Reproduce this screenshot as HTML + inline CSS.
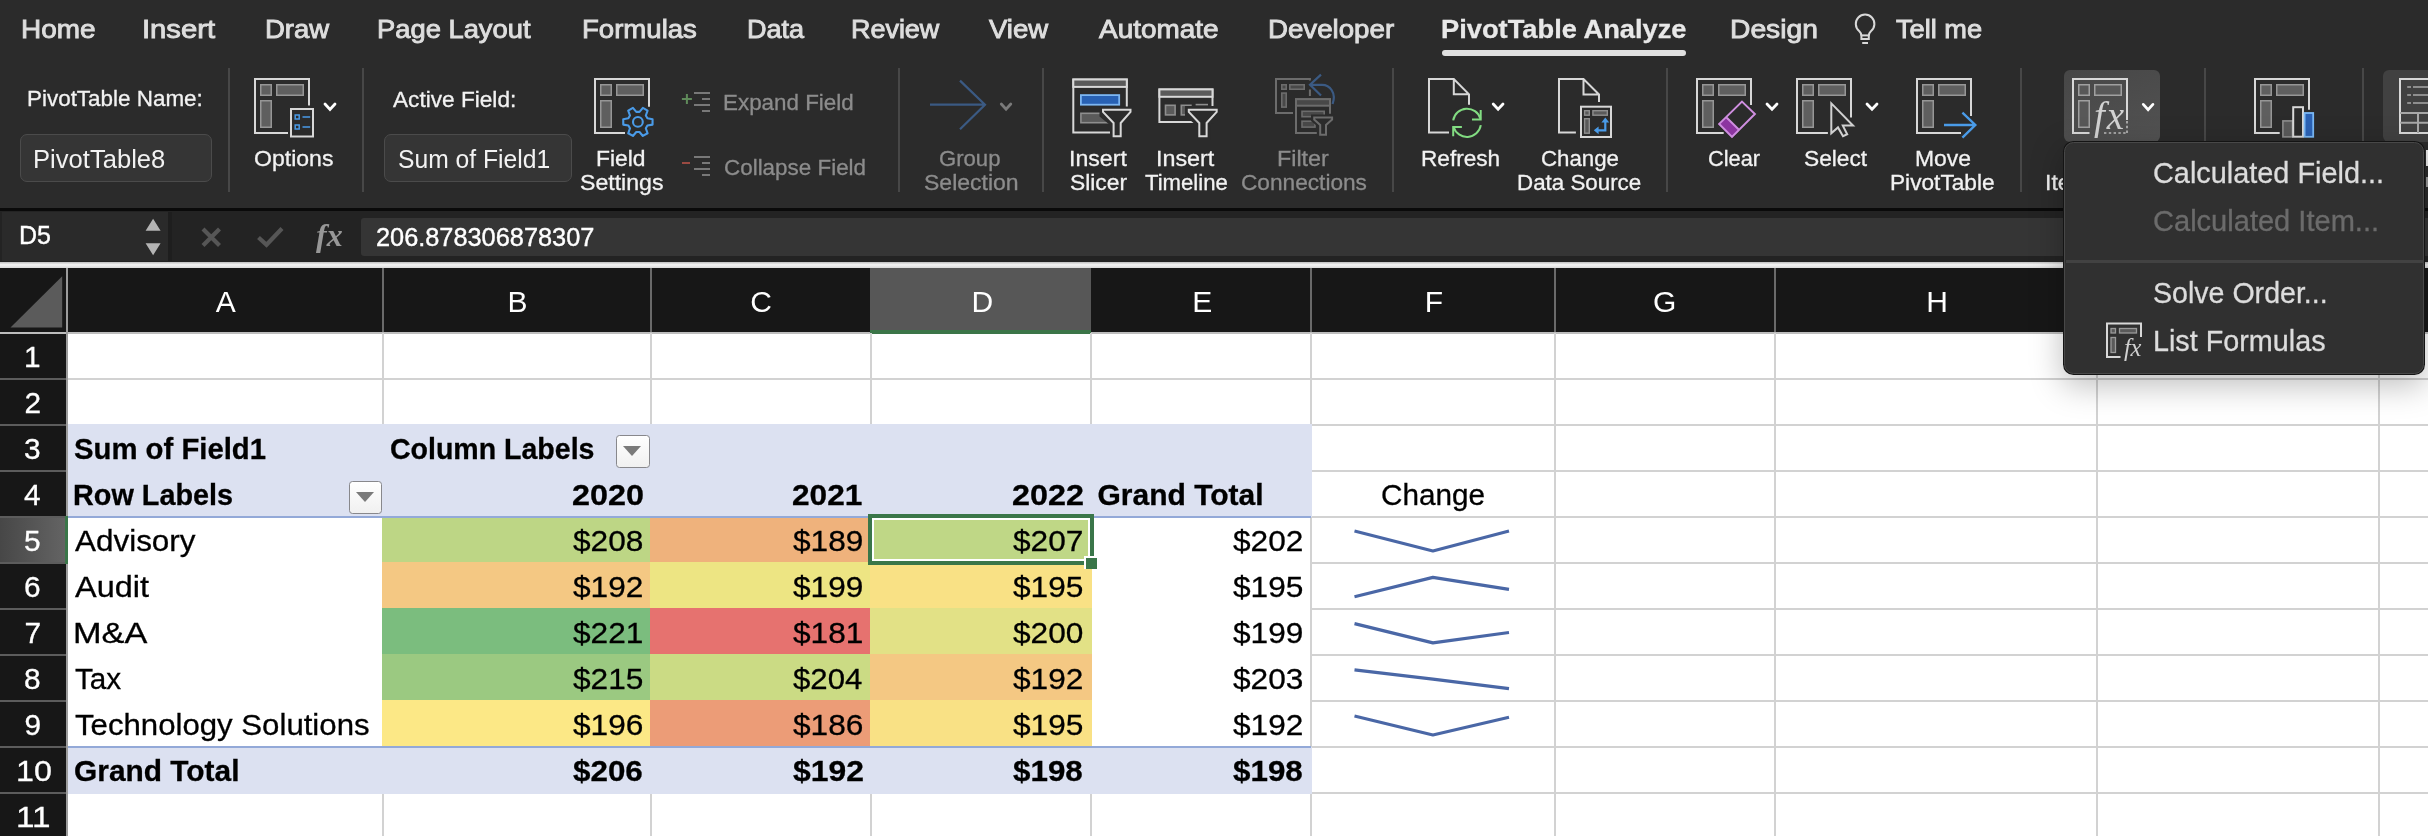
<!DOCTYPE html>
<html><head><meta charset="utf-8"><title>Excel</title>
<style>
html,body{margin:0;padding:0;}
body{width:2428px;height:836px;overflow:hidden;position:relative;background:#2b2b2b;font-family:"Liberation Sans",sans-serif;}
.t{position:absolute;white-space:pre;line-height:1;transform-origin:0 0;}
.a{position:absolute;}
.vsep{position:absolute;top:68px;height:124px;width:2px;background:#474747;}
.inp{position:absolute;background:#353535;border:1.5px solid #4b4b4b;border-radius:7px;box-sizing:border-box;}
.gv{position:absolute;top:333px;width:2px;height:503px;background:#d2d2d2;}
.gh{position:absolute;left:68px;height:2px;width:2360px;background:#d2d2d2;}
.hv{position:absolute;top:268px;width:2px;height:64px;background:#6a6a6a;}
.rh{position:absolute;left:0;width:66px;height:2px;background:#5c5c5c;}
.fbtn{position:absolute;width:33.5px;height:33px;box-sizing:border-box;border:1.9px solid #88888c;border-radius:3.5px;background:linear-gradient(#ffffff,#f0f0f0);}
.fbtn:after{content:"";position:absolute;left:6.2px;top:10.8px;border-left:9px solid transparent;border-right:9px solid transparent;border-top:10.4px solid #7a7a7a;}
</style></head><body><div id="w" style="position:absolute;left:0;top:0;width:2428px;height:836px;overflow:hidden;will-change:transform;">

<!-- ===== ribbon ===== -->
<div class="a" style="left:0;top:0;width:2428px;height:208px;background:#2b2b2b;"></div>
<div class="a" style="left:1442px;top:50px;width:244px;height:6px;border-radius:3px;background:#e0e0e0;"></div>
<div class="vsep" style="left:228px"></div><div class="vsep" style="left:362px"></div>
<div class="vsep" style="left:898px"></div><div class="vsep" style="left:1042px"></div>
<div class="vsep" style="left:1392px"></div><div class="vsep" style="left:1666px"></div>
<div class="vsep" style="left:2020px"></div><div class="vsep" style="left:2204px"></div>
<div class="vsep" style="left:2362px"></div>
<div class="inp" style="left:20px;top:134px;width:192px;height:48px;"></div>
<div class="inp" style="left:384px;top:134px;width:188px;height:48px;"></div>
<!-- pressed buttons -->
<div class="a" style="left:2064px;top:70px;width:96px;height:72px;border-radius:6px;background:linear-gradient(160deg,#474747,#525252);"></div>
<div class="a" style="left:2383px;top:70px;width:60px;height:72px;border-radius:6px;background:#414141;"></div>

<svg class="a" style="left:0;top:0" width="2428" height="210" viewBox="0 0 2428 210"><g fill="none" stroke="#d8d8d8" stroke-width="2"><path d="M1861.4 35.6Q1861.2 33 1859.1 31A9.3 9.3 0 1 1 1871.1 31Q1869 33 1868.8 35.6"/><rect x="1861.4" y="35.4" width="7.4" height="3.6"/><path d="M1862.2 43H1868"/></g><path d="M288 133H255V79H309V105.5" fill="none" stroke="#d8d8d8" stroke-width="2"/><rect x="260.75" y="84.75" width="10.5" height="10.5" fill="#5f5f5f" stroke="#969696" stroke-width="1.5"/><rect x="276.75" y="84.75" width="26.5" height="10.5" fill="#5f5f5f" stroke="#969696" stroke-width="1.5"/><rect x="260.75" y="100.75" width="10.5" height="26.5" fill="#5f5f5f" stroke="#969696" stroke-width="1.5"/><rect x="291" y="109" width="22" height="27.5" fill="#2b2b2b" stroke="#d8d8d8" stroke-width="2"/><g fill="none" stroke="#4a9be8" stroke-width="1.5"><rect x="295.2" y="115" width="4" height="4"/><rect x="295.2" y="125" width="4" height="4"/><path d="M302.5 117H310.2M302.5 127H310.2"/></g><path d="M325 104L330.0 109.39999999999999L335 104" fill="none" stroke="#fff" stroke-width="2.8" stroke-linecap="round" stroke-linejoin="miter"/><path d="M625 133H595V79H649V106.8" fill="none" stroke="#d8d8d8" stroke-width="2"/><rect x="600.75" y="84.75" width="10.5" height="10.5" fill="#5f5f5f" stroke="#969696" stroke-width="1.5"/><rect x="616.75" y="84.75" width="26.5" height="10.5" fill="#5f5f5f" stroke="#969696" stroke-width="1.5"/><rect x="600.75" y="100.75" width="10.5" height="26.5" fill="#5f5f5f" stroke="#969696" stroke-width="1.5"/><path d="M647.42 118.24 L652.55 119.18 L652.55 124.62 L647.42 125.56 L645.83 128.32 L647.58 133.23 L642.87 135.95 L639.50 131.97 L636.30 131.97 L632.93 135.95 L628.22 133.23 L629.97 128.32 L628.38 125.56 L623.25 124.62 L623.25 119.18 L628.38 118.24 L629.97 115.48 L628.22 110.57 L632.93 107.85 L636.30 111.83 L639.50 111.83 L642.87 107.85 L647.58 110.57 L645.83 115.48Z" fill="#2b2b2b" stroke="#4a9be8" stroke-width="2.1" stroke-linejoin="round"/><circle cx="637.9" cy="121.9" r="4.9" fill="none" stroke="#4a9be8" stroke-width="2.1"/><path d="M681.9 99H691.9M686.9 94V104" stroke="#5f8a5a" stroke-width="2" fill="none"/><path d="M694 93H710M702 99H710M694 105H710M702 111H710" stroke="#787878" stroke-width="2" fill="none"/><path d="M682 163H690" stroke="#9a4a42" stroke-width="2" fill="none"/><path d="M694 157H710M702 163H710M694 169H710M702 175H710" stroke="#787878" stroke-width="2" fill="none"/><path d="M930 104.7H984.5M960 80.6L985 104.7L960 129.3" fill="none" stroke="#3b5a83" stroke-width="2.2"/><path d="M1001.3 104L1006.05 109.2L1010.8 104" fill="none" stroke="#7a7a7a" stroke-width="2.8" stroke-linecap="round" stroke-linejoin="miter"/><path d="M1110.5 132.5H1073.3V79.5H1126.8V108" fill="none" stroke="#d8d8d8" stroke-width="2"/><rect x="1073.3" y="79.5" width="53.5" height="7.4" fill="#5a5a5a" stroke="#d8d8d8" stroke-width="2"/><rect x="1080.9" y="95.1" width="38.3" height="9.6" fill="#2861b3" stroke="#7cb6f2" stroke-width="1.8"/><rect x="1080.9" y="113.3" width="30" height="9.4" fill="#5a5a5a" stroke="#8e8e8e" stroke-width="1.6"/><path d="M1099.5 106.5H1134V118L1124.5 125V140H1110V125L1099.5 116.5Z" fill="#2b2b2b"/><path d="M1103.0 109.7H1130.5V111.9L1120.7 123V136.3H1113.6V123L1103.0 111.9Z" fill="#2b2b2b" stroke="#d8d8d8" stroke-width="2" stroke-linejoin="miter"/><path d="M1196.5 122H1159.4V89.4H1212.5V107.5" fill="none" stroke="#d8d8d8" stroke-width="2"/><rect x="1159.4" y="89.4" width="53.1" height="7.4" fill="#5a5a5a" stroke="#d8d8d8" stroke-width="2"/><rect x="1165.5" y="105.3" width="9.6" height="9.6" fill="#5a5a5a" stroke="#8e8e8e" stroke-width="1.6"/><rect x="1181.3" y="105.3" width="9.6" height="9.6" fill="#5a5a5a" stroke="#8e8e8e" stroke-width="1.6"/><path d="M1195.6 104.6H1208" stroke="#8e8e8e" stroke-width="1.6"/><path d="M1185 106H1220V118L1210.5 125V140H1196V125L1185 116Z" fill="#2b2b2b"/><path d="M1188.8 109.7H1216.7V111.9L1206.6 123V136.3H1199.3V123L1188.8 111.9Z" fill="#2b2b2b" stroke="#d8d8d8" stroke-width="2" stroke-linejoin="miter"/><path d="M1309.9 89.6V96M1309.9 80.5V79H1276V113H1293" fill="none" stroke="#6c6c6c" stroke-width="2"/><rect x="1281.8" y="84.8" width="4.4" height="4.4" fill="#484848" stroke="#6c6c6c" stroke-width="1.6"/><rect x="1289.8" y="84.8" width="14.4" height="4.4" fill="#484848" stroke="#6c6c6c" stroke-width="1.6"/><rect x="1281.8" y="93.1" width="4.4" height="14" fill="#484848" stroke="#6c6c6c" stroke-width="1.6"/><path d="M1316.8 132.9H1296V99.2H1330V113.7" fill="none" stroke="#6c6c6c" stroke-width="2"/><rect x="1296" y="99.2" width="34" height="6.5" fill="#484848" stroke="#6c6c6c" stroke-width="2"/><rect x="1302" y="111.3" width="22.2" height="5.4" fill="#484848" stroke="#6c6c6c" stroke-width="1.6"/><rect x="1302" y="121.2" width="13" height="5.9" fill="#484848" stroke="#6c6c6c" stroke-width="1.6"/><path d="M1311 114.4H1335V121L1329 126V138H1317V126L1311 121Z" fill="#2b2b2b"/><path d="M1314.2 117.4H1332.1V119.60000000000001L1326.0 125V134.7H1320.2V125L1314.2 119.60000000000001Z" fill="#2b2b2b" stroke="#6c6c6c" stroke-width="2" stroke-linejoin="miter"/><path d="M1321 74.6L1310 84.8L1321 95.5M1310.5 84.8H1322C1330 84.8 1336.5 93 1332.6 104" fill="none" stroke="#3b5a83" stroke-width="2.2"/><path d="M1449 132.4H1429V79H1453.8L1469 94.3V104.8M1453.8 79V94.3H1469" fill="none" stroke="#d8d8d8" stroke-width="2" stroke-linejoin="miter"/><circle cx="1467" cy="122.8" r="17" fill="#2b2b2b"/><path d="M1453.2 120.4A14 14 0 0 1 1480.4 118.6M1480.8 125.2A14 14 0 0 1 1453.6 127" fill="none" stroke="#82dc82" stroke-width="2"/><path d="M1480.7 110V119.6H1472M1453.2 136.2V126.9H1461.9" fill="none" stroke="#82dc82" stroke-width="2"/><path d="M1493.2 104L1498.1 109.3L1503 104" fill="none" stroke="#fff" stroke-width="2.8" stroke-linecap="round" stroke-linejoin="miter"/><path d="M1575.9 132.4H1559V79H1583.5L1599 94.5V102M1583.5 79V94.5H1599" fill="none" stroke="#d8d8d8" stroke-width="2"/><rect x="1581" y="106.7" width="30" height="30.3" fill="#2b2b2b" stroke="#d8d8d8" stroke-width="2"/><rect x="1584.6" y="110.7" width="4.7" height="4.5" fill="#5a5a5a" stroke="#8e8e8e" stroke-width="1.4"/><rect x="1592.9" y="110.7" width="14.4" height="4.5" fill="#5a5a5a" stroke="#8e8e8e" stroke-width="1.4"/><rect x="1584.6" y="118.7" width="4.7" height="14.5" fill="#5a5a5a" stroke="#8e8e8e" stroke-width="1.4"/><path d="M1605.3 121V130.3H1597" fill="none" stroke="#4a9be8" stroke-width="2.2"/><path d="M1605.3 117.6L1609.2 122.4H1601.4ZM1593.8 130.3L1598.6 126.4V134.2Z" fill="#4a9be8"/><path d="M1723.7 133H1697V79H1751V105" fill="none" stroke="#d8d8d8" stroke-width="2"/><rect x="1702.75" y="84.75" width="10.5" height="10.5" fill="#5f5f5f" stroke="#969696" stroke-width="1.5"/><rect x="1718.75" y="84.75" width="26.5" height="10.5" fill="#5f5f5f" stroke="#969696" stroke-width="1.5"/><rect x="1702.75" y="100.75" width="10.5" height="26.5" fill="#5f5f5f" stroke="#969696" stroke-width="1.5"/><path d="M1742 100.7L1755.8 114L1732 137.8L1718.3 123.9Z" fill="#2b2b2b"/><path d="M1726.3 117.5L1739.4 130.4L1732 137.8L1718.3 123.9Z" fill="#8c35a0"/><path d="M1742 101.6L1754.9 114L1732 136.9L1719.2 123.9ZM1726.3 117.2L1739.2 130" fill="none" stroke="#cf8ee0" stroke-width="2" stroke-linejoin="miter"/><path d="M1767 104L1772.0 109.3L1777 104" fill="none" stroke="#fff" stroke-width="2.8" stroke-linecap="round" stroke-linejoin="miter"/><path d="M1827.9 133H1797V79H1851V117.5" fill="none" stroke="#d8d8d8" stroke-width="2"/><rect x="1802.75" y="84.75" width="10.5" height="10.5" fill="#5f5f5f" stroke="#969696" stroke-width="1.5"/><rect x="1818.75" y="84.75" width="26.5" height="10.5" fill="#5f5f5f" stroke="#969696" stroke-width="1.5"/><rect x="1802.75" y="100.75" width="10.5" height="26.5" fill="#5f5f5f" stroke="#969696" stroke-width="1.5"/><path d="M1831.3 103.4V133.2L1838 127.4L1843 136.2L1847.2 134.2L1842.8 125.6H1853Z" fill="#2b2b2b" stroke="#d0d0d0" stroke-width="2" stroke-linejoin="miter"/><path d="M1867 104L1872.0 109.3L1877 104" fill="none" stroke="#fff" stroke-width="2.8" stroke-linecap="round" stroke-linejoin="miter"/><path d="M1961 133H1917V79H1971V115.9" fill="none" stroke="#d8d8d8" stroke-width="2"/><rect x="1922.75" y="84.75" width="10.5" height="10.5" fill="#5f5f5f" stroke="#969696" stroke-width="1.5"/><rect x="1938.75" y="84.75" width="26.5" height="10.5" fill="#5f5f5f" stroke="#969696" stroke-width="1.5"/><rect x="1922.75" y="100.75" width="10.5" height="26.5" fill="#5f5f5f" stroke="#969696" stroke-width="1.5"/><path d="M1944 125H1975M1962.4 112.7L1975.3 125L1962.4 137.6" fill="none" stroke="#4a9be8" stroke-width="2.4"/><path d="M2089.5 133H2073V79H2127V120" fill="none" stroke="#d8d8d8" stroke-width="2"/><rect x="2078.75" y="84.75" width="10.5" height="10.5" fill="#585858" stroke="#a0a0a0" stroke-width="1.5"/><rect x="2094.75" y="84.75" width="26.5" height="10.5" fill="#585858" stroke="#a0a0a0" stroke-width="1.5"/><rect x="2078.75" y="100.75" width="10.5" height="26.5" fill="#585858" stroke="#a0a0a0" stroke-width="1.5"/><path d="M2104 133H2127M2127 121V133" stroke="#bdbdbd" stroke-width="1.6" stroke-dasharray="2.4 2.4" fill="none"/><text x="2094" y="128.5" font-family="Liberation Serif,serif" font-style="italic" font-size="39" fill="#d2d2d2" letter-spacing="2">fx</text><path d="M2143.3 104.4L2148.1000000000004 109.6L2152.9 104.4" fill="none" stroke="#fff" stroke-width="2.8" stroke-linecap="round" stroke-linejoin="miter"/><path d="M2279.7 133H2255V79H2309V109.7" fill="none" stroke="#d8d8d8" stroke-width="2"/><rect x="2260.75" y="84.75" width="10.5" height="10.5" fill="#5f5f5f" stroke="#969696" stroke-width="1.5"/><rect x="2276.75" y="84.75" width="26.5" height="10.5" fill="#5f5f5f" stroke="#969696" stroke-width="1.5"/><rect x="2260.75" y="100.75" width="10.5" height="26.5" fill="#5f5f5f" stroke="#969696" stroke-width="1.5"/><rect x="2282.9" y="120.9" width="9.6" height="16" fill="#5a5a5a" stroke="#8e8e8e" stroke-width="1.6"/><rect x="2293.2" y="107.2" width="9.8" height="29.5" fill="#2b2b2b" stroke="#d8d8d8" stroke-width="2"/><rect x="2304.6" y="113" width="8.6" height="23.8" fill="#2b62b5" stroke="#7ab8f5" stroke-width="1.8"/><rect x="2400" y="79" width="60" height="54" fill="none" stroke="#d8d8d8" stroke-width="2"/><path d="M2407.2 87H2411M2413 87H2430M2407.2 95H2411M2413 95H2430M2407.2 103H2411M2413 103H2430" stroke="#a8a8a8" stroke-width="1.6"/><path d="M2400 113H2430M2400 122.8H2430M2418 113V133" stroke="#a8a8a8" stroke-width="2"/></svg>
<div class="a" style="left:2425.6px;top:150px;width:2px;height:16px;background:#e8e8e8;"></div><div class="a" style="left:2426px;top:177px;width:2px;height:10px;background:#9a9a9a;"></div>

<!-- ===== formula bar ===== -->
<div class="a" style="left:0;top:208px;width:2428px;height:3px;background:#0a0a0a;"></div>
<div class="a" style="left:0;top:211px;width:2428px;height:52px;background:#232323;"></div>
<div class="a" style="left:2px;top:212px;width:166px;height:49px;background:#2a2a2a;"></div>
<div class="a" style="left:168px;top:212px;width:4px;height:49px;background:#1e1e1e;"></div>
<div class="a" style="left:361px;top:218px;width:2067px;height:38px;background:#353535;border-radius:3px 0 0 3px;"></div>
<div class="a" style="left:0;top:262px;width:2428px;height:6px;background:linear-gradient(#bdbdbd,#f4f4f4 45%,#d9d9d9);"></div>
<svg class="a" style="left:0;top:208px" width="400" height="60" viewBox="0 208 400 60"><path d="M153.1 218.7L160.6 230.8H145.6ZM153.1 255.2L160.6 243.2H145.6Z" fill="#b4b4b4"/><path d="M203 229L219.5 245.4M219.5 229L203 245.4" stroke="#565656" stroke-width="4.2" fill="none"/><path d="M258.5 237.5L266.5 244.8L282 228.5" stroke="#565656" stroke-width="4.2" fill="none"/><text x="316" y="245.5" font-family="Liberation Serif,serif" font-style="italic" font-weight="700" font-size="32" fill="#979797" letter-spacing="0">fx</text></svg>

<span class="t" style="left:20.9px;top:16.1px;font-size:26px;color:#dedede;transform:scaleX(1.0746);-webkit-text-stroke:0.9px #dedede;">Home</span>
<span class="t" style="left:142.3px;top:16.1px;font-size:26px;color:#dedede;transform:scaleX(1.1238);-webkit-text-stroke:0.9px #dedede;">Insert</span>
<span class="t" style="left:264.9px;top:16.1px;font-size:26px;color:#dedede;transform:scaleX(1.0576);-webkit-text-stroke:0.9px #dedede;">Draw</span>
<span class="t" style="left:377.1px;top:16.1px;font-size:26px;color:#dedede;transform:scaleX(1.0514);-webkit-text-stroke:0.9px #dedede;">Page Layout</span>
<span class="t" style="left:581.5px;top:16.1px;font-size:26px;color:#dedede;transform:scaleX(1.0604);-webkit-text-stroke:0.9px #dedede;">Formulas</span>
<span class="t" style="left:746.7px;top:16.1px;font-size:26px;color:#dedede;transform:scaleX(1.0407);-webkit-text-stroke:0.9px #dedede;">Data</span>
<span class="t" style="left:851.4px;top:16.1px;font-size:26px;color:#dedede;transform:scaleX(1.0357);-webkit-text-stroke:0.9px #dedede;">Review</span>
<span class="t" style="left:989.0px;top:16.1px;font-size:26px;color:#dedede;transform:scaleX(1.0589);-webkit-text-stroke:0.9px #dedede;">View</span>
<span class="t" style="left:1098.5px;top:16.1px;font-size:26px;color:#dedede;transform:scaleX(1.0748);-webkit-text-stroke:0.9px #dedede;">Automate</span>
<span class="t" style="left:1267.6px;top:16.1px;font-size:26px;color:#dedede;transform:scaleX(1.0641);-webkit-text-stroke:0.9px #dedede;">Developer</span>
<span class="t" style="left:1730.4px;top:16.1px;font-size:26px;color:#dedede;transform:scaleX(1.0859);-webkit-text-stroke:0.9px #dedede;">Design</span>
<span class="t" style="left:1895.7px;top:16.1px;font-size:26px;color:#dedede;transform:scaleX(1.0451);-webkit-text-stroke:0.9px #dedede;">Tell me</span>
<span class="t" style="left:1440.5px;top:15.7px;font-size:26.5px;color:#e8e8e8;transform:scaleX(1.0292);font-weight:700;-webkit-text-stroke:0.3px #e8e8e8;">PivotTable Analyze</span>
<span class="t" style="left:26.7px;top:88.3px;font-size:22px;color:#f2f2f2;transform:scaleX(1.0195);-webkit-text-stroke:0.3px #f2f2f2;">PivotTable Name:</span>
<span class="t" style="left:33.0px;top:147.2px;font-size:25px;color:#f2f2f2;transform:scaleX(1.0238);">PivotTable8</span>
<span class="t" style="left:253.5px;top:148.3px;font-size:22px;color:#f2f2f2;transform:scaleX(1.0473);-webkit-text-stroke:0.3px #f2f2f2;">Options</span>
<span class="t" style="left:392.7px;top:88.5px;font-size:22px;color:#f2f2f2;transform:scaleX(1.0288);-webkit-text-stroke:0.3px #f2f2f2;">Active Field:</span>
<span class="t" style="left:398.0px;top:147.2px;font-size:25px;color:#f2f2f2;transform:scaleX(0.9868);">Sum of Field1</span>
<span class="t" style="left:595.9px;top:148.3px;font-size:22px;color:#f2f2f2;transform:scaleX(1.0378);-webkit-text-stroke:0.3px #f2f2f2;">Field</span>
<span class="t" style="left:579.6px;top:172.3px;font-size:22px;color:#f2f2f2;transform:scaleX(1.0500);-webkit-text-stroke:0.3px #f2f2f2;">Settings</span>
<span class="t" style="left:722.8px;top:92.3px;font-size:22px;color:#8c8c8c;transform:scaleX(1.0176);-webkit-text-stroke:0.3px #8c8c8c;">Expand Field</span>
<span class="t" style="left:723.8px;top:156.5px;font-size:22px;color:#8c8c8c;transform:scaleX(1.0190);-webkit-text-stroke:0.3px #8c8c8c;">Collapse Field</span>
<span class="t" style="left:939.4px;top:148.3px;font-size:22px;color:#8c8c8c;transform:scaleX(1.0050);-webkit-text-stroke:0.3px #8c8c8c;">Group</span>
<span class="t" style="left:923.7px;top:172.3px;font-size:22px;color:#8c8c8c;transform:scaleX(1.0455);-webkit-text-stroke:0.3px #8c8c8c;">Selection</span>
<span class="t" style="left:1068.9px;top:148.3px;font-size:22px;color:#f2f2f2;transform:scaleX(1.0509);-webkit-text-stroke:0.3px #f2f2f2;">Insert</span>
<span class="t" style="left:1070.0px;top:172.3px;font-size:22px;color:#f2f2f2;transform:scaleX(1.0370);-webkit-text-stroke:0.3px #f2f2f2;">Slicer</span>
<span class="t" style="left:1155.7px;top:148.3px;font-size:22px;color:#f2f2f2;transform:scaleX(1.0604);-webkit-text-stroke:0.3px #f2f2f2;">Insert</span>
<span class="t" style="left:1145.2px;top:172.3px;font-size:22px;color:#f2f2f2;transform:scaleX(1.0061);-webkit-text-stroke:0.3px #f2f2f2;">Timeline</span>
<span class="t" style="left:1277.1px;top:148.3px;font-size:22px;color:#8c8c8c;transform:scaleX(1.0596);-webkit-text-stroke:0.3px #8c8c8c;">Filter</span>
<span class="t" style="left:1240.8px;top:172.3px;font-size:22px;color:#8c8c8c;transform:scaleX(1.0298);-webkit-text-stroke:0.3px #8c8c8c;">Connections</span>
<span class="t" style="left:1420.5px;top:148.3px;font-size:22px;color:#f2f2f2;transform:scaleX(1.0270);-webkit-text-stroke:0.3px #f2f2f2;">Refresh</span>
<span class="t" style="left:1540.6px;top:148.3px;font-size:22px;color:#f2f2f2;transform:scaleX(1.0120);-webkit-text-stroke:0.3px #f2f2f2;">Change</span>
<span class="t" style="left:1516.5px;top:172.3px;font-size:22px;color:#f2f2f2;transform:scaleX(1.0158);-webkit-text-stroke:0.3px #f2f2f2;">Data Source</span>
<span class="t" style="left:1707.6px;top:148.3px;font-size:22px;color:#f2f2f2;transform:scaleX(0.9885);-webkit-text-stroke:0.3px #f2f2f2;">Clear</span>
<span class="t" style="left:1803.8px;top:148.3px;font-size:22px;color:#f2f2f2;transform:scaleX(1.0333);-webkit-text-stroke:0.3px #f2f2f2;">Select</span>
<span class="t" style="left:1915.1px;top:148.3px;font-size:22px;color:#f2f2f2;transform:scaleX(1.0412);-webkit-text-stroke:0.3px #f2f2f2;">Move</span>
<span class="t" style="left:1890.3px;top:172.3px;font-size:22px;color:#f2f2f2;transform:scaleX(1.0303);-webkit-text-stroke:0.3px #f2f2f2;">PivotTable</span>
<span class="t" style="left:2045.4px;top:172.3px;font-size:22px;color:#f2f2f2;transform:scaleX(1.0490);-webkit-text-stroke:0.3px #f2f2f2;">Items</span>
<span class="t" style="left:18.7px;top:222.9px;font-size:25.5px;color:#fff;transform:scaleX(0.9800);-webkit-text-stroke:0.4px #fff;">D5</span>
<span class="t" style="left:375.5px;top:225.3px;font-size:25.5px;color:#fff;transform:scaleX(0.9931);-webkit-text-stroke:0.4px #fff;">206.878306878307</span>

<!-- ===== sheet ===== -->
<div class="a" style="left:0;top:268px;width:2428px;height:568px;background:#ffffff;"></div>
<div class="a" style="left:0;top:268px;width:2428px;height:64px;background:#171717;"></div>
<div class="a" style="left:0;top:332px;width:66px;height:504px;background:#171717;"></div>
<!-- selected col/row header -->
<div class="a" style="left:870px;top:268px;width:221px;height:64px;background:#575757;"></div>

<div class="a" style="left:0;top:517px;width:66px;height:46px;background:linear-gradient(90deg,#474747,#646464);"></div>
<!-- header borders -->
<div class="a" style="left:0;top:332px;width:2428px;height:2px;background:#bdbdbd;"></div><div class="a" style="left:870px;top:330px;width:221px;height:4px;background:#3b7548;"></div>
<div class="a" style="left:66px;top:268px;width:2px;height:568px;background:#9c9c9c;"></div>
<div class="hv" style="left:382px"></div><div class="hv" style="left:650px"></div>
<div class="hv" style="left:1310px"></div><div class="hv" style="left:1554px"></div><div class="hv" style="left:1774px"></div>
<div class="hv" style="left:2096px"></div><div class="hv" style="left:2378px"></div>
<div class="rh" style="top:378px"></div><div class="rh" style="top:424px"></div><div class="rh" style="top:470px"></div><div class="rh" style="top:516px"></div><div class="rh" style="top:562px"></div><div class="rh" style="top:608px"></div><div class="rh" style="top:654px"></div><div class="rh" style="top:700px"></div><div class="rh" style="top:746px"></div><div class="rh" style="top:792px"></div>
<div class="a" style="left:65px;top:516px;width:3px;height:48px;background:#3a7649;"></div>
<svg class="a" style="left:0;top:268px" width="68" height="64"><path d="M62.2 8.2V59.4H10.5Z" fill="#5b5b5b"/></svg>
<div class="gv" style="left:382px"></div><div class="gv" style="left:650px"></div><div class="gv" style="left:870px"></div><div class="gv" style="left:1090px"></div><div class="gv" style="left:1310px"></div><div class="gv" style="left:1554px"></div><div class="gv" style="left:1774px"></div><div class="gv" style="left:2096px"></div><div class="gv" style="left:2378px"></div><div class="gh" style="top:378px"></div><div class="gh" style="top:424px"></div><div class="gh" style="top:470px"></div><div class="gh" style="top:516px"></div><div class="gh" style="top:562px"></div><div class="gh" style="top:608px"></div><div class="gh" style="top:654px"></div><div class="gh" style="top:700px"></div><div class="gh" style="top:746px"></div><div class="gh" style="top:792px"></div>
<div class="a" style="left:68px;top:424px;width:1244px;height:93px;background:#dce1f1"></div><div class="a" style="left:68px;top:747px;width:1244px;height:47px;background:#dce1f1"></div><div class="a" style="left:68px;top:517px;width:1242px;height:230px;background:#fff"></div><div class="a" style="left:382px;top:516px;width:268px;height:46px;background:#bdd685"></div><div class="a" style="left:650px;top:516px;width:220px;height:46px;background:#efb27c"></div><div class="a" style="left:870px;top:516px;width:222px;height:46px;background:#bfd786"></div><div class="a" style="left:382px;top:562px;width:268px;height:46px;background:#f4c883"></div><div class="a" style="left:650px;top:562px;width:220px;height:46px;background:#ede583"></div><div class="a" style="left:870px;top:562px;width:222px;height:46px;background:#f9e185"></div><div class="a" style="left:382px;top:608px;width:268px;height:46px;background:#7bbd7e"></div><div class="a" style="left:650px;top:608px;width:220px;height:46px;background:#e6726f"></div><div class="a" style="left:870px;top:608px;width:222px;height:46px;background:#e2e186"></div><div class="a" style="left:382px;top:654px;width:268px;height:46px;background:#9bc981"></div><div class="a" style="left:650px;top:654px;width:220px;height:46px;background:#cbdb84"></div><div class="a" style="left:870px;top:654px;width:222px;height:46px;background:#f4c883"></div><div class="a" style="left:382px;top:700px;width:268px;height:46px;background:#fce886"></div><div class="a" style="left:650px;top:700px;width:220px;height:46px;background:#ec9c77"></div><div class="a" style="left:870px;top:700px;width:222px;height:46px;background:#f9e185"></div><div class="a" style="left:68px;top:515.5px;width:1243px;height:2.5px;background:#93a9d8"></div><div class="a" style="left:68px;top:746px;width:1243px;height:2px;background:#93a9d8"></div><div class="fbtn" style="left:616.3px;top:434.5px"></div><div class="fbtn" style="left:348.5px;top:480.6px"></div>
<span class="t" style="left:215.8px;top:287.0px;font-size:30px;color:#fff;">A</span>
<span class="t" style="left:507.5px;top:287.0px;font-size:30px;color:#fff;">B</span>
<span class="t" style="left:750.2px;top:287.0px;font-size:30px;color:#fff;">C</span>
<span class="t" style="left:971.6px;top:287.0px;font-size:30px;color:#fff;">D</span>
<span class="t" style="left:1192.2px;top:287.0px;font-size:30px;color:#fff;">E</span>
<span class="t" style="left:1424.7px;top:287.0px;font-size:30px;color:#fff;">F</span>
<span class="t" style="left:1653.1px;top:287.0px;font-size:30px;color:#fff;">G</span>
<span class="t" style="left:1926.2px;top:287.0px;font-size:30px;color:#fff;">H</span>
<span class="t" style="left:24.0px;top:342.3px;font-size:29.8px;color:#fff;-webkit-text-stroke:0.3px #fff;">1</span>
<span class="t" style="left:24.5px;top:388.3px;font-size:29.8px;color:#fff;-webkit-text-stroke:0.3px #fff;">2</span>
<span class="t" style="left:24.0px;top:434.3px;font-size:29.8px;color:#fff;-webkit-text-stroke:0.3px #fff;">3</span>
<span class="t" style="left:24.0px;top:480.3px;font-size:29.8px;color:#fff;-webkit-text-stroke:0.3px #fff;">4</span>
<span class="t" style="left:24.0px;top:526.3px;font-size:29.8px;color:#fff;-webkit-text-stroke:0.3px #fff;">5</span>
<span class="t" style="left:24.0px;top:572.3px;font-size:29.8px;color:#fff;-webkit-text-stroke:0.3px #fff;">6</span>
<span class="t" style="left:24.5px;top:618.3px;font-size:29.8px;color:#fff;-webkit-text-stroke:0.3px #fff;">7</span>
<span class="t" style="left:24.0px;top:664.3px;font-size:29.8px;color:#fff;-webkit-text-stroke:0.3px #fff;">8</span>
<span class="t" style="left:24.5px;top:710.3px;font-size:29.8px;color:#fff;-webkit-text-stroke:0.3px #fff;">9</span>
<span class="t" style="left:15.8px;top:756.3px;font-size:29.8px;color:#fff;transform:scaleX(1.0833);-webkit-text-stroke:0.3px #fff;">10</span>
<span class="t" style="left:16.1px;top:802.3px;font-size:29.8px;color:#fff;transform:scaleX(1.1179);-webkit-text-stroke:0.3px #fff;">11</span>
<span class="t" style="left:73.6px;top:434.0px;font-size:30px;color:#000;transform:scaleX(0.9764);font-weight:700;-webkit-text-stroke:0.3px #000;">Sum of Field1</span>
<span class="t" style="left:389.5px;top:434.0px;font-size:30px;color:#000;transform:scaleX(0.9507);font-weight:700;-webkit-text-stroke:0.3px #000;">Column Labels</span>
<span class="t" style="left:73.1px;top:480.0px;font-size:30px;color:#000;transform:scaleX(0.9604);font-weight:700;-webkit-text-stroke:0.3px #000;">Row Labels</span>
<span class="t" style="left:571.9px;top:480.2px;font-size:29.8px;color:#000;transform:scaleX(1.0859);font-weight:700;-webkit-text-stroke:0.3px #000;">2020</span>
<span class="t" style="left:791.9px;top:480.2px;font-size:29.8px;color:#000;transform:scaleX(1.0615);font-weight:700;-webkit-text-stroke:0.3px #000;">2021</span>
<span class="t" style="left:1011.9px;top:480.2px;font-size:29.8px;color:#000;transform:scaleX(1.0859);font-weight:700;-webkit-text-stroke:0.3px #000;">2022</span>
<span class="t" style="left:1097.5px;top:480.0px;font-size:30px;color:#000;transform:scaleX(1.0000);font-weight:700;-webkit-text-stroke:0.3px #000;">Grand Total</span>
<span class="t" style="left:1381.0px;top:480.0px;font-size:30px;color:#000;transform:scaleX(0.9903);-webkit-text-stroke:0.3px #000;">Change</span>
<span class="t" style="left:75.0px;top:526.0px;font-size:30px;color:#000;transform:scaleX(1.0478);-webkit-text-stroke:0.3px #000;">Advisory</span>
<span class="t" style="left:573.0px;top:526.2px;font-size:29.8px;color:#000;transform:scaleX(1.0615);-webkit-text-stroke:0.3px #000;">$208</span>
<span class="t" style="left:793.0px;top:526.2px;font-size:29.8px;color:#000;transform:scaleX(1.0615);-webkit-text-stroke:0.3px #000;">$189</span>
<span class="t" style="left:1013.0px;top:526.2px;font-size:29.8px;color:#000;transform:scaleX(1.0615);-webkit-text-stroke:0.3px #000;">$207</span>
<span class="t" style="left:1233.0px;top:526.2px;font-size:29.8px;color:#000;transform:scaleX(1.0615);-webkit-text-stroke:0.3px #000;">$202</span>
<span class="t" style="left:75.0px;top:572.0px;font-size:30px;color:#000;transform:scaleX(1.0809);-webkit-text-stroke:0.3px #000;">Audit</span>
<span class="t" style="left:573.0px;top:572.2px;font-size:29.8px;color:#000;transform:scaleX(1.0615);-webkit-text-stroke:0.3px #000;">$192</span>
<span class="t" style="left:793.0px;top:572.2px;font-size:29.8px;color:#000;transform:scaleX(1.0615);-webkit-text-stroke:0.3px #000;">$199</span>
<span class="t" style="left:1013.0px;top:572.2px;font-size:29.8px;color:#000;transform:scaleX(1.0615);-webkit-text-stroke:0.3px #000;">$195</span>
<span class="t" style="left:1233.0px;top:572.2px;font-size:29.8px;color:#000;transform:scaleX(1.0615);-webkit-text-stroke:0.3px #000;">$195</span>
<span class="t" style="left:72.7px;top:618.0px;font-size:30px;color:#000;transform:scaleX(1.1429);-webkit-text-stroke:0.3px #000;">M&amp;A</span>
<span class="t" style="left:573.0px;top:618.2px;font-size:29.8px;color:#000;transform:scaleX(1.0615);-webkit-text-stroke:0.3px #000;">$221</span>
<span class="t" style="left:793.0px;top:618.2px;font-size:29.8px;color:#000;transform:scaleX(1.0615);-webkit-text-stroke:0.3px #000;">$181</span>
<span class="t" style="left:1013.0px;top:618.2px;font-size:29.8px;color:#000;transform:scaleX(1.0615);-webkit-text-stroke:0.3px #000;">$200</span>
<span class="t" style="left:1233.0px;top:618.2px;font-size:29.8px;color:#000;transform:scaleX(1.0615);-webkit-text-stroke:0.3px #000;">$199</span>
<span class="t" style="left:75.0px;top:664.0px;font-size:30px;color:#000;transform:scaleX(0.9891);-webkit-text-stroke:0.3px #000;">Tax</span>
<span class="t" style="left:573.0px;top:664.2px;font-size:29.8px;color:#000;transform:scaleX(1.0615);-webkit-text-stroke:0.3px #000;">$215</span>
<span class="t" style="left:793.0px;top:664.2px;font-size:29.8px;color:#000;transform:scaleX(1.0455);-webkit-text-stroke:0.3px #000;">$204</span>
<span class="t" style="left:1013.0px;top:664.2px;font-size:29.8px;color:#000;transform:scaleX(1.0615);-webkit-text-stroke:0.3px #000;">$192</span>
<span class="t" style="left:1233.0px;top:664.2px;font-size:29.8px;color:#000;transform:scaleX(1.0615);-webkit-text-stroke:0.3px #000;">$203</span>
<span class="t" style="left:75.0px;top:710.0px;font-size:30px;color:#000;transform:scaleX(1.0389);-webkit-text-stroke:0.3px #000;">Technology Solutions</span>
<span class="t" style="left:573.0px;top:710.2px;font-size:29.8px;color:#000;transform:scaleX(1.0615);-webkit-text-stroke:0.3px #000;">$196</span>
<span class="t" style="left:793.0px;top:710.2px;font-size:29.8px;color:#000;transform:scaleX(1.0615);-webkit-text-stroke:0.3px #000;">$186</span>
<span class="t" style="left:1013.0px;top:710.2px;font-size:29.8px;color:#000;transform:scaleX(1.0615);-webkit-text-stroke:0.3px #000;">$195</span>
<span class="t" style="left:1233.0px;top:710.2px;font-size:29.8px;color:#000;transform:scaleX(1.0615);-webkit-text-stroke:0.3px #000;">$192</span>
<span class="t" style="left:73.8px;top:756.0px;font-size:30px;color:#000;transform:scaleX(0.9963);font-weight:700;-webkit-text-stroke:0.3px #000;">Grand Total</span>
<span class="t" style="left:572.5px;top:756.2px;font-size:29.8px;color:#000;transform:scaleX(1.0530);font-weight:700;-webkit-text-stroke:0.3px #000;">$206</span>
<span class="t" style="left:792.5px;top:756.2px;font-size:29.8px;color:#000;transform:scaleX(1.0692);font-weight:700;-webkit-text-stroke:0.3px #000;">$192</span>
<span class="t" style="left:1012.5px;top:756.2px;font-size:29.8px;color:#000;transform:scaleX(1.0530);font-weight:700;-webkit-text-stroke:0.3px #000;">$198</span>
<span class="t" style="left:1232.5px;top:756.2px;font-size:29.8px;color:#000;transform:scaleX(1.0530);font-weight:700;-webkit-text-stroke:0.3px #000;">$198</span>
<svg class="a" style="left:0;top:1px" width="2428" height="836" fill="none" stroke="#4a67a6" stroke-width="3.2" stroke-linejoin="round"><polyline points="1354.5,530 1432.9,550 1509,530"/><polyline points="1354.5,595.7 1432.9,576.4 1509,588.4"/><polyline points="1354.5,622.6 1432.9,641.9 1509,631.5"/><polyline points="1354.5,668.8 1432.9,678.2 1509,687.7"/><polyline points="1354.5,715 1432.9,734 1509,716.3"/></svg>
<div class="a" style="left:868px;top:514px;width:226px;height:51px;box-sizing:border-box;border:4px solid #3a7649;"></div><div class="a" style="left:872px;top:518px;width:218px;height:43px;box-sizing:border-box;border:2px solid #fff;"></div><div class="a" style="left:1084px;top:556px;width:13px;height:13px;background:#fff"></div><div class="a" style="left:1086px;top:558px;width:11px;height:11px;background:#3a7649"></div>

<!-- ===== menu ===== -->
<div class="a" style="left:2063.8px;top:142px;width:360.7px;height:232.2px;box-sizing:border-box;border-radius:9.5px;background:#303030;border:1.5px solid #484848;box-shadow:0 0 0 1px #141414,0 10px 32px 2px rgba(0,0,0,.25);"></div><div class="a" style="left:2065.5px;top:259.5px;width:358px;height:3px;background:#424242"></div><svg class="a" style="left:2100px;top:318px" width="50" height="46" viewBox="2100 318 50 46"><path d="M2120.5 357H2107V323.5H2141V337" fill="none" stroke="#d8d8d8" stroke-width="2"/><rect x="2111" y="328.5" width="4.5" height="4.5" fill="#5a5a5a" stroke="#9a9a9a" stroke-width="1.3"/><rect x="2119.5" y="328.5" width="17" height="4.5" fill="#5a5a5a" stroke="#9a9a9a" stroke-width="1.3"/><rect x="2111" y="337.5" width="4.5" height="15" fill="#5a5a5a" stroke="#9a9a9a" stroke-width="1.3"/><text x="2124" y="355.5" font-family="Liberation Serif,serif" font-style="italic" font-size="24.5" fill="#d0d0d0" letter-spacing="-0.3">fx</text></svg>
<span class="t" style="left:2152.6px;top:158.7px;font-size:29px;color:#dcdcdc;transform:scaleX(0.9952);-webkit-text-stroke:0.3px #dcdcdc;">Calculated Field...</span>
<span class="t" style="left:2152.6px;top:206.7px;font-size:29px;color:#6b6b6b;transform:scaleX(1.0018);-webkit-text-stroke:0.3px #6b6b6b;">Calculated Item...</span>
<span class="t" style="left:2152.6px;top:278.7px;font-size:29px;color:#dcdcdc;transform:scaleX(0.9851);-webkit-text-stroke:0.3px #dcdcdc;">Solve Order...</span>
<span class="t" style="left:2152.5px;top:326.9px;font-size:29px;color:#dcdcdc;transform:scaleX(0.9912);-webkit-text-stroke:0.3px #dcdcdc;">List Formulas</span>
</div></body></html>
